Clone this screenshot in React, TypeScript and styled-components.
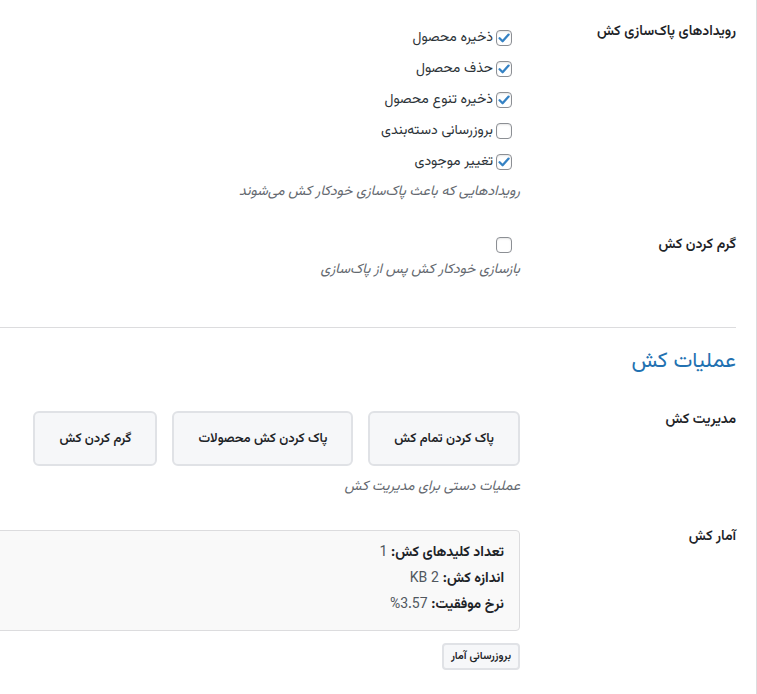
import React from 'react'
import styled, { createGlobalStyle } from 'styled-components'

const GlobalStyle = createGlobalStyle`
  html, body {
    margin: 0;
    padding: 0;
    background: #fff;
  }
  body {
    font-family: Vazirmatn, "Noto Sans Arabic", sans-serif;
    font-size: 13px;
    color: #3c434a;
  }
`

const Page = styled.div`
  direction: rtl;
  box-sizing: border-box;
  width: 757px;
  height: 694px;
  overflow: hidden;
  border-right: 1px solid #dcdcde;
`

const Content = styled.div`
  width: 800px;
  padding: 3px 20px 0 0;
`

const Row = styled.div`
  display: flex;
  align-items: flex-start;
`

const Th = styled.div`
  flex: none;
  width: 196px;
  padding: 20px 0 20px 10px;
  font-size: 14px;
  font-weight: 600;
  line-height: 1.3;
  color: #1d2327;
`

const Td = styled.div<{ $bottom?: number }>`
  flex: 1;
  padding: 15px 10px ${p => p.$bottom ?? 15}px 10px;
`

const Options = styled.div`
  padding-top: 4px;
`

const Option = styled.label<{ $height?: number }>`
  display: flex;
  align-items: center;
  gap: 3px;
  height: ${p => p.$height ?? 31}px;
  margin-right: 8px;
  font-size: 14px;
  color: #2c3338;
  cursor: pointer;
`

const Box = styled.span`
  flex: none;
  box-sizing: border-box;
  width: 16px;
  height: 16px;
  border: 1px solid #8c8f94;
  border-radius: 4px;
  background: #fff;
  display: grid;
  place-items: center;
  box-shadow: inset 0 1px 2px rgba(0, 0, 0, 0.1);
`

const Description = styled.p<{ $top?: number }>`
  margin: ${p => p.$top ?? 6}px 0 0;
  font-size: 14px;
  line-height: 18px;
  font-style: italic;
  color: #646970;
`

const Divider = styled.hr`
  border: 0;
  border-top: 1px solid #dcdcde;
  margin: 33px 0 0;
`

const Heading = styled.h2`
  margin: 20px 0 15px;
  font-size: 21.5px;
  font-weight: 400;
  line-height: 28px;
  color: #2271b1;
`

const Actions = styled.div`
  display: flex;
  gap: 15px;
  margin-top: 5px;
`

const ActionButton = styled.button`
  box-sizing: border-box;
  height: 55px;
  padding: 0 24px;
  border: 2px solid #e0e2e6;
  border-radius: 6px;
  background: #f6f7f9;
  font-family: inherit;
  font-size: 13px;
  font-weight: 600;
  color: #1d2327;
  cursor: pointer;
`

const Stats = styled.div`
  margin-top: 7px;
  padding: 9px 15px 12px;
  border: 1px solid #dcdcde;
  border-radius: 4px;
  background: #f9f9f9;
  font-size: 14px;
  line-height: 26px;
  color: #50575e;
`

const StatLine = styled.div`
  strong {
    font-weight: 700;
    color: #1d2327;
  }
`

const SmallButton = styled.button`
  margin-top: 12px;
  box-sizing: border-box;
  height: 27px;
  padding: 0 7px;
  border: 2px solid #e0e2e6;
  border-radius: 4px;
  background: #f6f7f9;
  font-family: inherit;
  font-size: 11px;
  font-weight: 600;
  color: #1d2327;
  cursor: pointer;
`

const Check: React.FC<{ checked: boolean }> = ({ checked }) => (
  <Box>
    {checked && (
      <svg width="14" height="14" viewBox="0 0 14 14">
        <path d="M2.6 7.2 L5.6 10.2 L11.6 3.6" fill="none" stroke="#3582c4" strokeWidth="2.3" strokeLinecap="round" strokeLinejoin="round" />
      </svg>
    )}
  </Box>
)

const events = [
  { label: 'ذخیره محصول', checked: true },
  { label: 'حذف محصول', checked: true },
  { label: 'ذخیره تنوع محصول', checked: true },
  { label: 'بروزرسانی دسته‌بندی', checked: false },
  { label: 'تغییر موجودی', checked: true },
]

const stats = [
  { label: 'تعداد کلیدهای کش:', value: '1' },
  { label: 'اندازه کش:', value: '2 KB' },
  { label: 'نرخ موفقیت:', value: '3.57%' },
]

const App: React.FC = () => {
  return (
    <Page>
      <GlobalStyle />
      <Content>
        <Row>
          <Th>رویدادهای پاک‌سازی کش</Th>
          <Td>
            <Options>
              {events.map(e => (
                <Option key={e.label}>
                  <Check checked={e.checked} />
                  {e.label}
                </Option>
              ))}
            </Options>
            <Description>رویدادهایی که باعث پاک‌سازی خودکار کش می‌شوند</Description>
          </Td>
        </Row>
        <Row>
          <Th>گرم کردن کش</Th>
          <Td>
            <Option $height={28}>
              <Check checked={false} />
            </Option>
            <Description $top={2}>بازسازی خودکار کش پس از پاک‌سازی</Description>
          </Td>
        </Row>

        <Divider />
        <Heading>عملیات کش</Heading>

        <Row>
          <Th>مدیریت کش</Th>
          <Td $bottom={12}>
            <Actions>
              <ActionButton>پاک کردن تمام کش</ActionButton>
              <ActionButton>پاک کردن کش محصولات</ActionButton>
              <ActionButton>گرم کردن کش</ActionButton>
            </Actions>
            <Description $top={12}>عملیات دستی برای مدیریت کش</Description>
          </Td>
        </Row>
        <Row>
          <Th>آمار کش</Th>
          <Td>
            <Stats>
              {stats.map(s => (
                <StatLine key={s.label}>
                  <strong>{s.label}</strong> {s.value}
                </StatLine>
              ))}
            </Stats>
            <SmallButton>بروزرسانی آمار</SmallButton>
          </Td>
        </Row>
      </Content>
    </Page>
  )
}

export default App
